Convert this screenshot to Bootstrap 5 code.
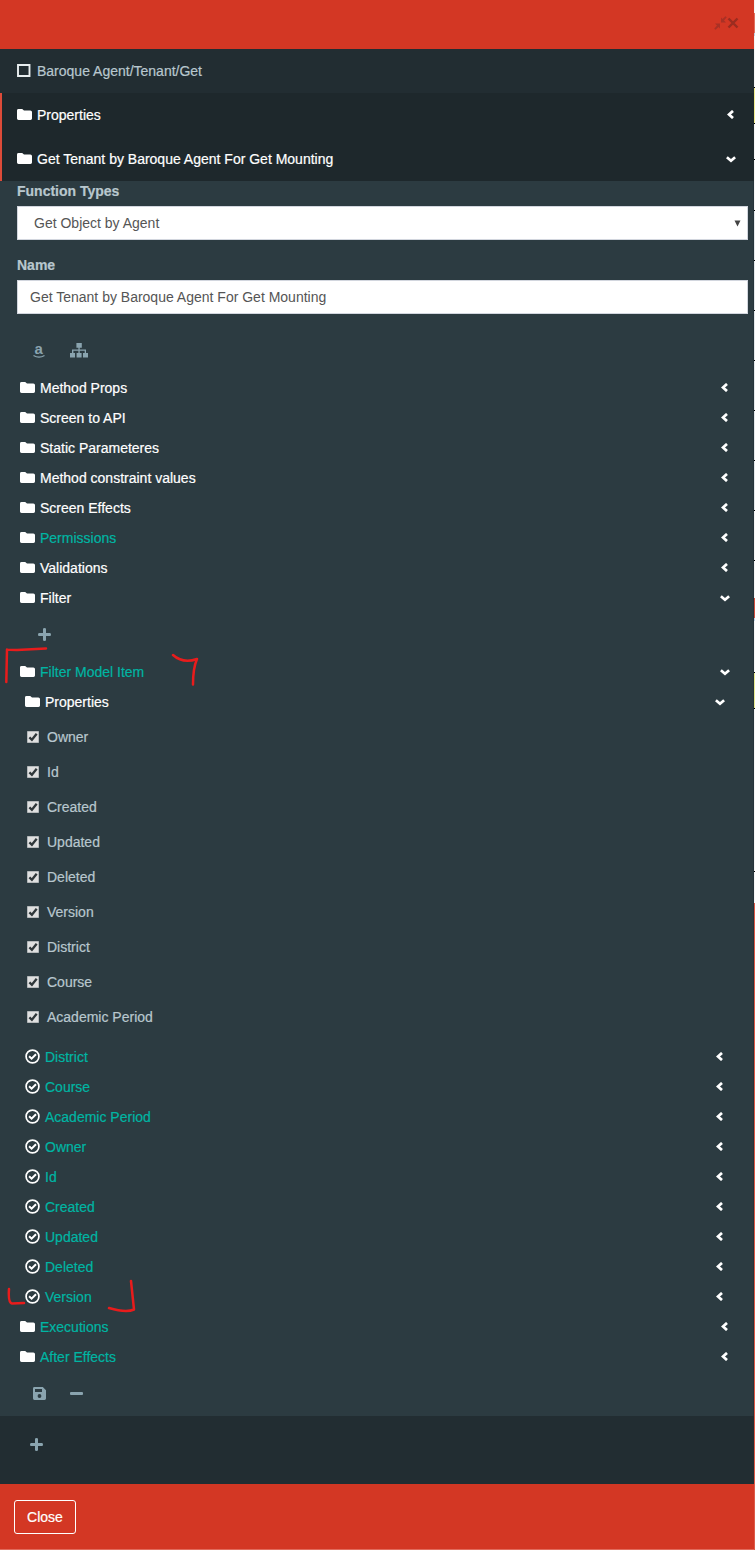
<!DOCTYPE html>
<html lang="en">
<head>
<meta charset="utf-8">
<title>Baroque Agent</title>
<link href="https://cdn.jsdelivr.net/npm/bootstrap@5.3.0/dist/css/bootstrap.min.css" rel="stylesheet">
<style>
body{font:14px/20px "Liberation Sans",Arial,sans-serif;color:#b8c7ce;background:#f4f4f4;overflow:hidden;-webkit-text-stroke:.2px}
.shell{width:755px;height:1550px;background:#d33724}
.panel-main{width:754px;background:#222d32}
.canvas-edge{width:1px;background:linear-gradient(#f4f4f4 13px,#e0705f 13px 33px,#c3d2e4 33px 36px,#f4f4f4 36px 87px,#000 87px 88px,#f3ee90 88px 123px,#000 123px 124px,#f4f4f4 124px 159px,#000 159px 160px,#f4f4f4 160px 210px,#000 210px 211px,#e4e8ea 211px 260px,#000 260px 261px,#e4e8ea 261px 310px,#000 310px 311px,#e4e8ea 311px 360px,#000 360px 361px,#e4e8ea 361px 410px,#000 410px 411px,#e4e8ea 411px 460px,#000 460px 461px,#e4e8ea 461px 510px,#000 510px 511px,#f4f4f4 511px 560px,#000 560px 561px,#f4f4f4 561px 598px,#d2503f 598px 618px,#c3d2e4 618px 621px,#f4f4f4 621px 672px,#000 672px 673px,#e9eb90 673px 708px,#000 708px 709px,#f4f4f4 709px 871px,#000 871px 872px,#f4f4f4 872px 903px,#dd5a48 903px)}
svg{display:block;flex:none;overflow:visible}
.bar-top{height:49px;background:#d33724;padding:16px 15px 0 0}
.bar-bottom{height:66px;background:#d33724;padding:16px 14px;border-bottom:1px solid #e16b5c}
.btn-shut{width:62px;height:34px;padding:6px 0;border:1px solid #fff;border-radius:3px;color:#fff;font-size:14px;line-height:20px}
.head-row{height:44px;padding:0 18px 0 16px}
.head-open{background:#1e282c;border-left:2px solid #dd4b39;color:#fff}
.head-open .head-row{padding-left:14px}
.content-area{height:1235px;background:#2c3b41;border-right:1px solid #25333a}
.fields{padding:0 5px 0 17px}
.fields label{font-weight:700;height:25px;display:block}
.form-control,.form-select{border-radius:0;border:1px solid #d2d6de;height:34px;font-size:14px;line-height:20px;color:#555;padding:6px 12px;background:#fff;-webkit-text-stroke:0}
.form-select{padding-left:16px}
.tree-row{height:30px;padding:0 23px 0 19px;color:#fff}
.tree-row.inner{padding:0 28px 0 24px}
.tree-row svg:first-child,.head-row svg:first-child{margin:0 5.500px 1px .5px}
.chev-left{margin:0 2px 1px auto}
.chev-down{margin:0 0 0 auto}
.teal{color:#00b5a3}
.tool-row{color:#8aa4af}
.check-row{height:35px;padding-left:27px}
.tick{width:12px;height:12px;margin-right:8px}
.marks{position:absolute;left:0;top:0;fill:none;stroke:#e81c1c;stroke-width:2.5;stroke-linecap:round;stroke-linejoin:round}
</style>
</head>
<body>
<svg width="0" height="0" class="position-absolute">
<symbol id="folder" viewBox="0 0 15 11"><path fill="#fff" d="M1.6 0H5.2L7 1.5H13.3Q15 1.5 15 3V9.6Q15 11 13.5 11H1.5Q0 11 0 9.6V1.4Q0 0 1.6 0Z"/></symbol>
<symbol id="left" viewBox="0 0 7 9"><path fill="none" stroke="#fff" stroke-width="2.7" d="M6 .9 2 4.5 6 8.1"/></symbol>
<symbol id="down" viewBox="0 0 10 7"><path fill="none" stroke="#fff" stroke-width="2.7" d="M.9 1.3 5 4.8 9.1 1.3"/></symbol>
<symbol id="ring" viewBox="0 0 15 15"><circle cx="7.5" cy="7.5" r="6.4" fill="none" stroke="#fff" stroke-width="1.7"/><path fill="none" stroke="#fff" stroke-width="2" d="M4.1 7.3 6.6 9.7 11 5.2"/></symbol>
<symbol id="box" viewBox="0 0 12 12"><path fill="#e0e0e0" stroke="#b5b9bb" d="M.5 .5H11.5V11.500H.5Z"/><path fill="none" stroke="#30383b" stroke-width="2.3" d="M2.4 6.4 4.9 8.8 9.7 2.7"/></symbol>
<symbol id="plus" viewBox="0 0 13 13"><path fill="currentColor" d="M5 1Q5 0 6.5 0T8 1V5H12Q13 5 13 6.5T12 8H8V12Q8 13 6.5 13T5 12V8H1Q0 8 0 6.5T1 5H5Z"/></symbol>
</svg>
<div class="shell d-flex position-relative">
<main class="panel-main d-flex flex-column">
<header class="bar-top d-flex justify-content-end align-items-start">
<svg width="13" height="14" viewBox="0 0 13 14"><path fill="#a93125" d="M1 7.500H6V12.500L4.500 11 1.500 13.800 .2 12.700 3 9.500ZM7 1.500 8.500 3 11.500 .2 12.700 1.300 10 4.500 12 6.500H7Z"/></svg>
<svg width="12" height="14" viewBox="0 0 12 14" fill="none" stroke="#9b2c20" stroke-width="2.4"><path d="M1.500 2.500 10.500 11.500M10.500 2.500 1.500 11.500"/></svg>
</header>
<div class="head-row d-flex align-items-center"><svg width="15" height="13" viewBox="0 0 15 13"><path d="M1 1H12.500V12H1Z" fill="none" stroke="#e8eef0" stroke-width="1.9"/></svg>Baroque Agent/Tenant/Get</div>
<div class="head-open">
<div class="head-row d-flex align-items-center"><svg width="15" height="11"><use href="#folder"/></svg>Properties<svg class="chev-left" width="7" height="9"><use href="#left"/></svg></div>
<div class="head-row d-flex align-items-center"><svg width="15" height="11"><use href="#folder"/></svg>Get Tenant by Baroque Agent For Get Mounting<svg class="chev-down" width="10" height="7"><use href="#down"/></svg></div>
</div>
<section class="content-area">
<div class="fields">
<label>Function Types</label>
<div class="form-select d-flex align-items-center" style="background-image:none;padding-right:6px">Get Object by Agent<svg class="ms-auto" width="7" height="7" viewBox="0 0 7 7"><path fill="#444" d="M.5 .5H6.5L3.5 6.5Z"/></svg></div>
<label style="margin-top:15px">Name</label>
<div class="form-control">Get Tenant by Baroque Agent For Get Mounting</div>
</div>
<div class="tool-row d-flex align-items-center" style="height:59px;padding:14px 0 0 32px">
<svg width="14" height="14" viewBox="0 0 14 14"><text x="2.500" y="10" font-size="15" font-weight="700" fill="currentColor">a</text><path d="M1.500 11.500Q7 14.800 12.500 11.500" fill="none" stroke="currentColor" stroke-width="1.3"/></svg>
<svg width="18" height="15" viewBox="0 0 18 15" style="margin-left:24px"><path fill="currentColor" d="M6.4 0H11.8V4.7H9.7V6.5H16V10H18V14.5H13V10H14.7V7.8H9.7V10H11.6V14.5H6.6V10H8.4V7.8H3.4V10H5V14.5H0V10H2V6.5H8.4V4.7H6.4Z"/></svg>
</div>
<div class="tree-row d-flex align-items-center"><svg width="15" height="11"><use href="#folder"/></svg>Method Props<svg class="chev-left" width="7" height="9"><use href="#left"/></svg></div>
<div class="tree-row d-flex align-items-center"><svg width="15" height="11"><use href="#folder"/></svg>Screen to API<svg class="chev-left" width="7" height="9"><use href="#left"/></svg></div>
<div class="tree-row d-flex align-items-center"><svg width="15" height="11"><use href="#folder"/></svg>Static Parameteres<svg class="chev-left" width="7" height="9"><use href="#left"/></svg></div>
<div class="tree-row d-flex align-items-center"><svg width="15" height="11"><use href="#folder"/></svg>Method constraint values<svg class="chev-left" width="7" height="9"><use href="#left"/></svg></div>
<div class="tree-row d-flex align-items-center"><svg width="15" height="11"><use href="#folder"/></svg>Screen Effects<svg class="chev-left" width="7" height="9"><use href="#left"/></svg></div>
<div class="tree-row teal d-flex align-items-center"><svg width="15" height="11"><use href="#folder"/></svg>Permissions<svg class="chev-left" width="7" height="9"><use href="#left"/></svg></div>
<div class="tree-row d-flex align-items-center"><svg width="15" height="11"><use href="#folder"/></svg>Validations<svg class="chev-left" width="7" height="9"><use href="#left"/></svg></div>
<div class="tree-row d-flex align-items-center"><svg width="15" height="11"><use href="#folder"/></svg>Filter<svg class="chev-down" width="10" height="7"><use href="#down"/></svg></div>
<div class="tool-row d-flex align-items-center" style="height:44px;padding:0 0 1px 37.500px"><svg width="13" height="13"><use href="#plus"/></svg></div>
<div class="tree-row teal d-flex align-items-center"><svg width="15" height="11"><use href="#folder"/></svg>Filter Model Item<svg class="chev-down" width="10" height="7"><use href="#down"/></svg></div>
<div class="tree-row inner d-flex align-items-center"><svg width="15" height="11"><use href="#folder"/></svg>Properties<svg class="chev-down" width="10" height="7"><use href="#down"/></svg></div>
<div style="padding:2px 0 8px">
<div class="check-row d-flex align-items-center"><svg class="tick"><use href="#box"/></svg>Owner</div>
<div class="check-row d-flex align-items-center"><svg class="tick"><use href="#box"/></svg>Id</div>
<div class="check-row d-flex align-items-center"><svg class="tick"><use href="#box"/></svg>Created</div>
<div class="check-row d-flex align-items-center"><svg class="tick"><use href="#box"/></svg>Updated</div>
<div class="check-row d-flex align-items-center"><svg class="tick"><use href="#box"/></svg>Deleted</div>
<div class="check-row d-flex align-items-center"><svg class="tick"><use href="#box"/></svg>Version</div>
<div class="check-row d-flex align-items-center"><svg class="tick"><use href="#box"/></svg>District</div>
<div class="check-row d-flex align-items-center"><svg class="tick"><use href="#box"/></svg>Course</div>
<div class="check-row d-flex align-items-center"><svg class="tick"><use href="#box"/></svg>Academic Period</div>
</div>
<div class="tree-row inner teal d-flex align-items-center"><svg width="15" height="15"><use href="#ring"/></svg>District<svg class="chev-left" width="7" height="9"><use href="#left"/></svg></div>
<div class="tree-row inner teal d-flex align-items-center"><svg width="15" height="15"><use href="#ring"/></svg>Course<svg class="chev-left" width="7" height="9"><use href="#left"/></svg></div>
<div class="tree-row inner teal d-flex align-items-center"><svg width="15" height="15"><use href="#ring"/></svg>Academic Period<svg class="chev-left" width="7" height="9"><use href="#left"/></svg></div>
<div class="tree-row inner teal d-flex align-items-center"><svg width="15" height="15"><use href="#ring"/></svg>Owner<svg class="chev-left" width="7" height="9"><use href="#left"/></svg></div>
<div class="tree-row inner teal d-flex align-items-center"><svg width="15" height="15"><use href="#ring"/></svg>Id<svg class="chev-left" width="7" height="9"><use href="#left"/></svg></div>
<div class="tree-row inner teal d-flex align-items-center"><svg width="15" height="15"><use href="#ring"/></svg>Created<svg class="chev-left" width="7" height="9"><use href="#left"/></svg></div>
<div class="tree-row inner teal d-flex align-items-center"><svg width="15" height="15"><use href="#ring"/></svg>Updated<svg class="chev-left" width="7" height="9"><use href="#left"/></svg></div>
<div class="tree-row inner teal d-flex align-items-center"><svg width="15" height="15"><use href="#ring"/></svg>Deleted<svg class="chev-left" width="7" height="9"><use href="#left"/></svg></div>
<div class="tree-row inner teal d-flex align-items-center"><svg width="15" height="15"><use href="#ring"/></svg>Version<svg class="chev-left" width="7" height="9"><use href="#left"/></svg></div>
<div class="tree-row teal d-flex align-items-center"><svg width="15" height="11"><use href="#folder"/></svg>Executions<svg class="chev-left" width="7" height="9"><use href="#left"/></svg></div>
<div class="tree-row teal d-flex align-items-center"><svg width="15" height="11"><use href="#folder"/></svg>After Effects<svg class="chev-left" width="7" height="9"><use href="#left"/></svg></div>
<div class="tool-row d-flex align-items-center" style="height:43px;padding-left:32.500px">
<svg width="13" height="13" viewBox="0 0 13 13"><path fill="currentColor" fill-rule="evenodd" d="M1.4 0H9.8L13 3.2V11.6Q13 13 11.6 13H1.4Q0 13 0 11.6V1.4Q0 0 1.4 0ZM2 2V5H9V2ZM6.5 7.1A1.9 1.9 0 1 0 6.5 10.9 1.9 1.9 0 1 0 6.5 7.1Z"/></svg>
<svg width="13" height="3" style="margin-left:24.500px"><rect width="13" height="3" rx="1" fill="currentColor"/></svg>
</div>
</section>
<div class="tool-row d-flex" style="height:68px;padding:22px 0 0 29.500px"><svg width="13" height="13"><use href="#plus"/></svg></div>
<footer class="bar-bottom"><button class="btn btn-shut">Close</button></footer>
</main>
<div class="canvas-edge"></div>
<svg class="marks" width="755" height="1550"><path d="M6.3 682 7 649.5Q8 650 17 650L46 648.5M173 655Q183 664 197 659Q193 668 193 684.500M9 1289Q8 1303 12 1303.500L24 1303M131 1281 134 1309.500Q126 1313 109 1308"/></svg>
</div>
<script src="https://cdn.jsdelivr.net/npm/bootstrap@5.3.0/dist/js/bootstrap.bundle.min.js"></script>
</body>
</html>
